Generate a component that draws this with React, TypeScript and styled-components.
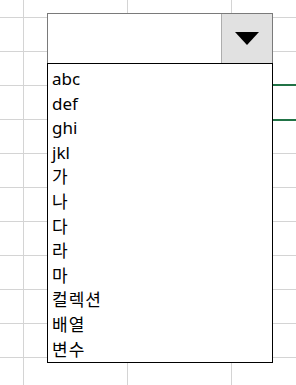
import React from 'react';
import styled, { createGlobalStyle } from 'styled-components';

const GlobalStyle = createGlobalStyle({
	'html, body': {
		margin: 0,
		padding: 0,
		background: '#fff',
	},
	body: {
		fontFamily: '"Noto Sans", "Noto Sans CJK KR", sans-serif',
	},
});

const Sheet = styled.div({
	position: 'relative',
	width: 296,
	height: 385,
	overflow: 'hidden',
	backgroundColor: '#fff',
	backgroundImage:
		'linear-gradient(to right, #d4d4d4 1px, transparent 1px), linear-gradient(to bottom, #d4d4d4 1px, transparent 1px)',
	backgroundSize: '104px 34px',
	backgroundPosition: '23px 17px',
});

const ActiveCell = styled.div({
	position: 'absolute',
	left: 230,
	top: 84,
	width: 106,
	height: 37,
	boxSizing: 'border-box',
	border: 'solid 2px #217346',
});

const Combo = styled.div({
	position: 'absolute',
	left: 47,
	top: 13,
	width: 226,
	display: 'flex',
	flexDirection: 'column',
});

const Field = styled.div({
	display: 'flex',
	height: 50,
	boxSizing: 'border-box',
	border: 'solid 1px #7a7a7a',
	borderBottom: 'none',
	background: '#fff',
});

const Input = styled.div({
	flex: 1,
});

const DropButton = styled.div({
	width: 50,
	display: 'flex',
	alignItems: 'center',
	justifyContent: 'center',
	background: '#e1e1e1',
	borderLeft: 'solid 1px #adadad',
});

const List = styled.ul({
	margin: 0,
	padding: '3px 0 0 4px',
	listStyle: 'none',
	border: 'solid 1px #000',
	background: '#fff',
});

const Item = styled.li({
	fontSize: 17,
	lineHeight: '24.6px',
	color: '#000',
	whiteSpace: 'nowrap',
	'&:lang(ko)': {
		letterSpacing: 1,
	},
});

const items = ['abc', 'def', 'ghi', 'jkl', '가', '나', '다', '라', '마', '컬렉션', '배열', '변수'];

export default function App() {
	return (
		<Sheet>
			<GlobalStyle />
			<ActiveCell />
			<Combo>
				<Field>
					<Input />
					<DropButton>
						<svg width="24" height="13" viewBox="0 0 24 13">
							<path d="M0 0h24L12 13z" fill="#000" />
						</svg>
					</DropButton>
				</Field>
				<List>
					{items.map((label, i) => (
						<Item key={label} lang={i > 3 ? 'ko' : 'en'}>
							{label}
						</Item>
					))}
				</List>
			</Combo>
		</Sheet>
	);
}
